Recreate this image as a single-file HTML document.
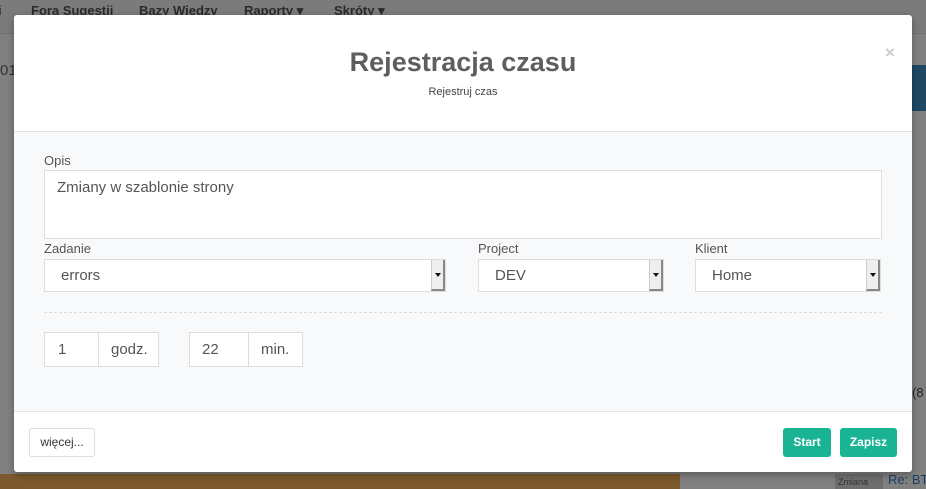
<!DOCTYPE html>
<html><head><meta charset="utf-8"><style>
*{box-sizing:border-box;margin:0;padding:0}
html,body{width:926px;height:489px;overflow:hidden;background:#808080}
body{font-family:"Liberation Sans",sans-serif;position:relative;color:#555}
.bg{position:absolute;left:0;top:0;width:926px;height:489px;background:#808080}
.nav{position:absolute;left:0;top:0;width:926px;height:34px;background:#7b7b7b;border-bottom:1px solid #707070}
.nav span{position:absolute;top:3px;font-size:13px;font-weight:bold;color:#2a2a2a;white-space:nowrap}
.abs{position:absolute;white-space:nowrap}
.modal{position:absolute;left:14px;top:15px;width:898px;height:457px;background:#fff;border-radius:3px;overflow:hidden;box-shadow:0 3px 8px rgba(0,0,0,.3)}
.body{position:absolute;left:0;top:116px;width:898px;height:281px;background:#f8f9fb;border-top:1px solid #e3e3e3;border-bottom:1px solid #e3e3e3}
.lbl{position:absolute;font-size:13px;color:#555}
.box{position:absolute;background:#fff;border:1px solid #ddd;font-size:15px;color:#555;white-space:nowrap}
.arrow{position:absolute;right:0;top:0;width:14px;height:100%;background:#eee;border-left:1px solid #ccc;border-right:2px solid #888;border-bottom:2px solid #888}
.arrow:after{content:"";position:absolute;left:3px;top:13px;border:3px solid transparent;border-top:4px solid #111}
.btn{position:absolute;border-radius:3px;font-size:12px;font-weight:bold;text-align:center;line-height:29px;height:29px;top:413px}
</style></head><body>
<div class="bg"></div>
<div class="nav">
<span style="left:-2px">i</span>
<span style="left:31px">Fora Sugestii</span>
<span style="left:139px">Bazy Wiedzy</span>
<span style="left:244px">Raporty ▾</span>
<span style="left:334px">Skróty ▾</span>
</div>
<div class="abs" style="left:0;top:62px;font-size:15px;color:#333">01</div>
<div class="abs" style="left:912px;top:65px;width:14px;height:46px;background:#1e4863"></div>
<div class="abs" style="left:0;top:474px;width:680px;height:15px;background:#7d5a2d"></div>
<div class="abs" style="left:835px;top:474px;width:48px;height:15px;background:#6e6e6e;font-size:9px;color:#333;padding:3px">Zmiana</div>
<div class="abs" style="left:888px;top:472px;font-size:13px;color:#1d3d66">Re: BT</div>
<div class="abs" style="left:912px;top:385px;font-size:13px;color:#222">(8</div>
<div class="modal">
<div class="abs" style="left:0;top:32px;width:898px;text-align:center;font-size:27px;font-weight:bold;color:#5e5e5e">Rejestracja czasu</div>
<div class="abs" style="left:0;top:71px;width:898px;text-align:center;font-size:11px;color:#444">Rejestruj czas</div>
<div class="abs" style="left:871px;top:28px;font-size:17px;font-weight:bold;color:#ccc">×</div>
<div class="body">
<div class="lbl" style="left:30px;top:21px">Opis</div>
<div class="box" style="left:30px;top:38px;width:838px;height:69px;padding:8px 12px">Zmiany w szablonie strony</div>
<div class="lbl" style="left:30px;top:109px">Zadanie</div>
<div class="box" style="left:30px;top:127px;width:402px;height:33px;padding:7px 16px">errors<div class="arrow"></div></div>
<div class="lbl" style="left:464px;top:109px">Project</div>
<div class="box" style="left:464px;top:127px;width:186px;height:33px;padding:7px 16px">DEV<div class="arrow"></div></div>
<div class="lbl" style="left:681px;top:109px">Klient</div>
<div class="box" style="left:681px;top:127px;width:186px;height:33px;padding:7px 16px">Home<div class="arrow"></div></div>
<div class="abs" style="left:30px;top:180px;width:838px;border-top:1px dashed #ddd"></div>
<div class="box" style="left:30px;top:200px;width:55px;height:35px;padding:8px 13px">1</div>
<div class="box" style="left:84px;top:200px;width:61px;height:35px;padding:8px 12px">godz.</div>
<div class="box" style="left:175px;top:200px;width:60px;height:35px;padding:8px 12px">22</div>
<div class="box" style="left:234px;top:200px;width:55px;height:35px;padding:8px 12px">min.</div>
</div>
<div class="btn" style="left:15px;width:66px;border:1px solid #ddd;color:#333;font-weight:normal;line-height:27px">więcej...</div>
<div class="btn" style="left:769px;width:48px;background:#1ab394;color:#fff">Start</div>
<div class="btn" style="left:826px;width:57px;background:#1ab394;color:#fff">Zapisz</div>
</div>
</body></html>
